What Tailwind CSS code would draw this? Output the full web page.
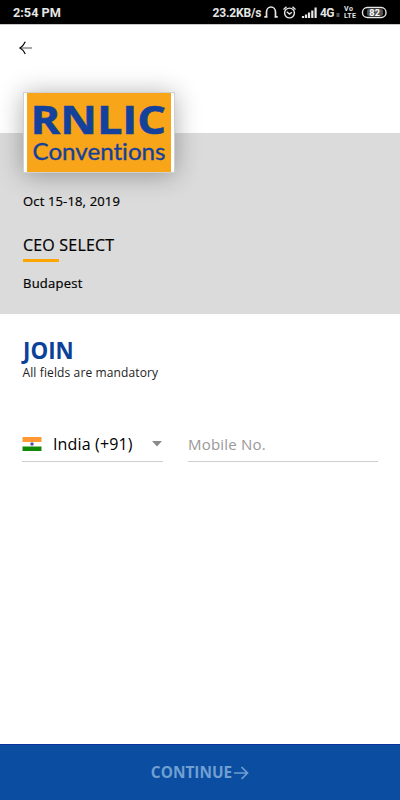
<!DOCTYPE html>
<html lang="en">
<head>
<meta charset="utf-8">
<title>Join</title>
<script src="https://cdn.jsdelivr.net/npm/@tailwindcss/browser@4"></script>
</head>
<body class="bg-white">
<div class="w-[400px] h-[800px] flex flex-col overflow-hidden bg-white font-['Open_Sans',sans-serif] text-black whitespace-nowrap">
  <header class="h-[24px] shrink-0 bg-black flex items-center justify-between pl-[13px] pr-[13px] font-[Roboto,sans-serif] text-[#e6e6e6]">
    <span class="text-[12.7px] font-bold leading-[24px] pt-[2px]">2:54 PM</span>
    <svg width="175" height="24" viewBox="212 0 175 24" fill="none" stroke="#e6e6e6">
      <g fill="#e6e6e6" stroke="none" font-family="Roboto, sans-serif" font-weight="700">
        <text x="212.500" y="17" font-size="12" textLength="49">23.2KB/s</text>
        <text x="320" y="17" font-size="12" textLength="14.500">4G</text>
        <text x="344" y="11.300" font-size="7" textLength="9">Vo</text>
        <text x="344" y="17.900" font-size="7" textLength="12">LTE</text>
      </g>
      <path d="M266.500 17V12a4.500 5 0 0 1 9 0v5M264.300 16.800h3.200M274.500 16.800h3.200" stroke-width="1.700"/>
      <circle cx="289.500" cy="13" r="4.900" stroke-width="1.400"/>
      <path d="M283.500 9.500l3-2.700M295.500 9.500l-3-2.700M286.800 11.800l2.700 2.200 2.400-1.700" stroke-width="1.400"/>
      <path d="M303 18v-2M306 18v-3.500M309 18v-5.500M312.300 18v-7.500M315.600 18V7.500" stroke-width="2.200"/>
      <rect x="336.500" y="13" width="3" height="4" fill="#555" stroke="none"/>
      <rect x="362.500" y="7.500" width="23.500" height="10" rx="4.800" stroke-width="1.400"/>
      <rect x="367" y="9" width="16" height="7" rx="2" fill="#555" stroke="none"/>
      <text x="369.300" y="16" font-size="9" font-weight="700" font-family="Roboto, sans-serif" fill="#fff" stroke="none" textLength="10.500">82</text>
    </svg>
  </header>

  <nav class="h-[109px] shrink-0 border-t border-[#c8c8c8] pl-[19px] pt-[15px]">
    <svg width="14" height="16" viewBox="0 0 14 16" fill="none"><path d="M1.500 8H13" stroke="#777" stroke-width="1.300"/><path d="M6.300 1.800C5 4.500 3 7 1 8c2 1 4 3.300 5.300 6" stroke="#000" stroke-width="1.200"/></svg>
  </nav>

  <section class="h-[181px] shrink-0 bg-[#dbdbdb] px-[23px]">
    <div class="relative -mt-[41px] w-[152px] h-[81px] border border-[#d0d0d0] bg-white pl-[3px] pr-[3px] shadow-[0_2px_24px_rgba(0,0,0,0.32)]">
      <svg width="144" height="79" viewBox="27 93 144 79" class="bg-[#f9a51a] overflow-visible" fill="#14419b" stroke="#14419b">
        <text x="30.500" y="133.800" font-size="40" font-weight="700" font-family="Open Sans, sans-serif" stroke-width=".6" textLength="135.500" lengthAdjust="spacingAndGlyphs">RNLIC</text>
        <text class="[font-variant-ligatures:none]" x="32.500" y="159.500" font-size="23.500" font-weight="400" font-family="Lato, sans-serif" stroke-width=".35" textLength="133" lengthAdjust="spacingAndGlyphs">Conventions</text>
      </svg>
    </div>
    <p class="mt-[18px] h-[20px] leading-[20px] text-[13px] [-webkit-text-stroke:0.2px] tracking-[0.15px]">Oct 15-18, 2019</p>
    <h2 class="mt-[22px] h-[24px] leading-[24px] text-[16px] [-webkit-text-stroke:0.2px] tracking-[0.2px]">CEO SELECT</h2>
    <div class="mt-[2px] w-[36px] h-[3px] bg-[#ffa500]"></div>
    <p class="mt-[11px] h-[20px] leading-[20px] text-[13px] [-webkit-text-stroke:0.2px] tracking-[0.25px]">Budapest</p>
  </section>

  <main class="grow px-[22px] pt-[23px]">
    <h1 class="h-[26px] leading-[27px] text-[22.3px] font-bold text-[#0c419a] pl-[1px]">JOIN</h1>
    <p class="h-[19px] leading-[19px] text-[12px] text-[#222] pl-[0.5px] tracking-[0.12px]">All fields are mandatory</p>
    <form class="mt-[47px] flex gap-[25px]">
      <div class="w-[141px] h-[33px] border-b border-[#cfcfcf] flex items-center pb-[2px]">
        <svg width="20" height="14" viewBox="0 0 20 14"><path fill="#ff9933" d="M0.500 0h19v5h-19z"/><path fill="#fff" d="M0 5h20v5H0z"/><path fill="#128807" d="M0.500 9.500h19V14h-19z"/><circle cx="10" cy="7" r="1.800" fill="#5656ad"/></svg>
        <span class="ml-[11px] grow text-[16px] leading-[24px] tracking-[0.15px]">India (+91)</span>
        <svg class="mr-[1px]" width="10" height="6" viewBox="0 0 10 6"><path d="M0 0h10L5 5.500z" fill="#8a8a8a"/></svg>
      </div>
      <div class="w-[190px] h-[33px] border-b border-[#cfcfcf] flex items-center pb-[2px] text-[15px] tracking-[0.2px] text-[#999]">Mobile No.</div>
    </form>
  </main>

  <footer class="h-[56px] shrink-0 border-t border-[#0e2fa0] bg-[#0b4da0] flex items-center justify-center gap-[2px] text-[#709fd2]">
    <span class="text-[15.4px] font-bold leading-[20px]">CONTINUE</span>
    <svg width="15" height="14" viewBox="0 0 15 14" fill="none" stroke="currentColor" stroke-width="1.700"><path d="M0 7h13.500M7.500 1l6 6-6 6"/></svg>
  </footer>
</div>
</body>
</html>
